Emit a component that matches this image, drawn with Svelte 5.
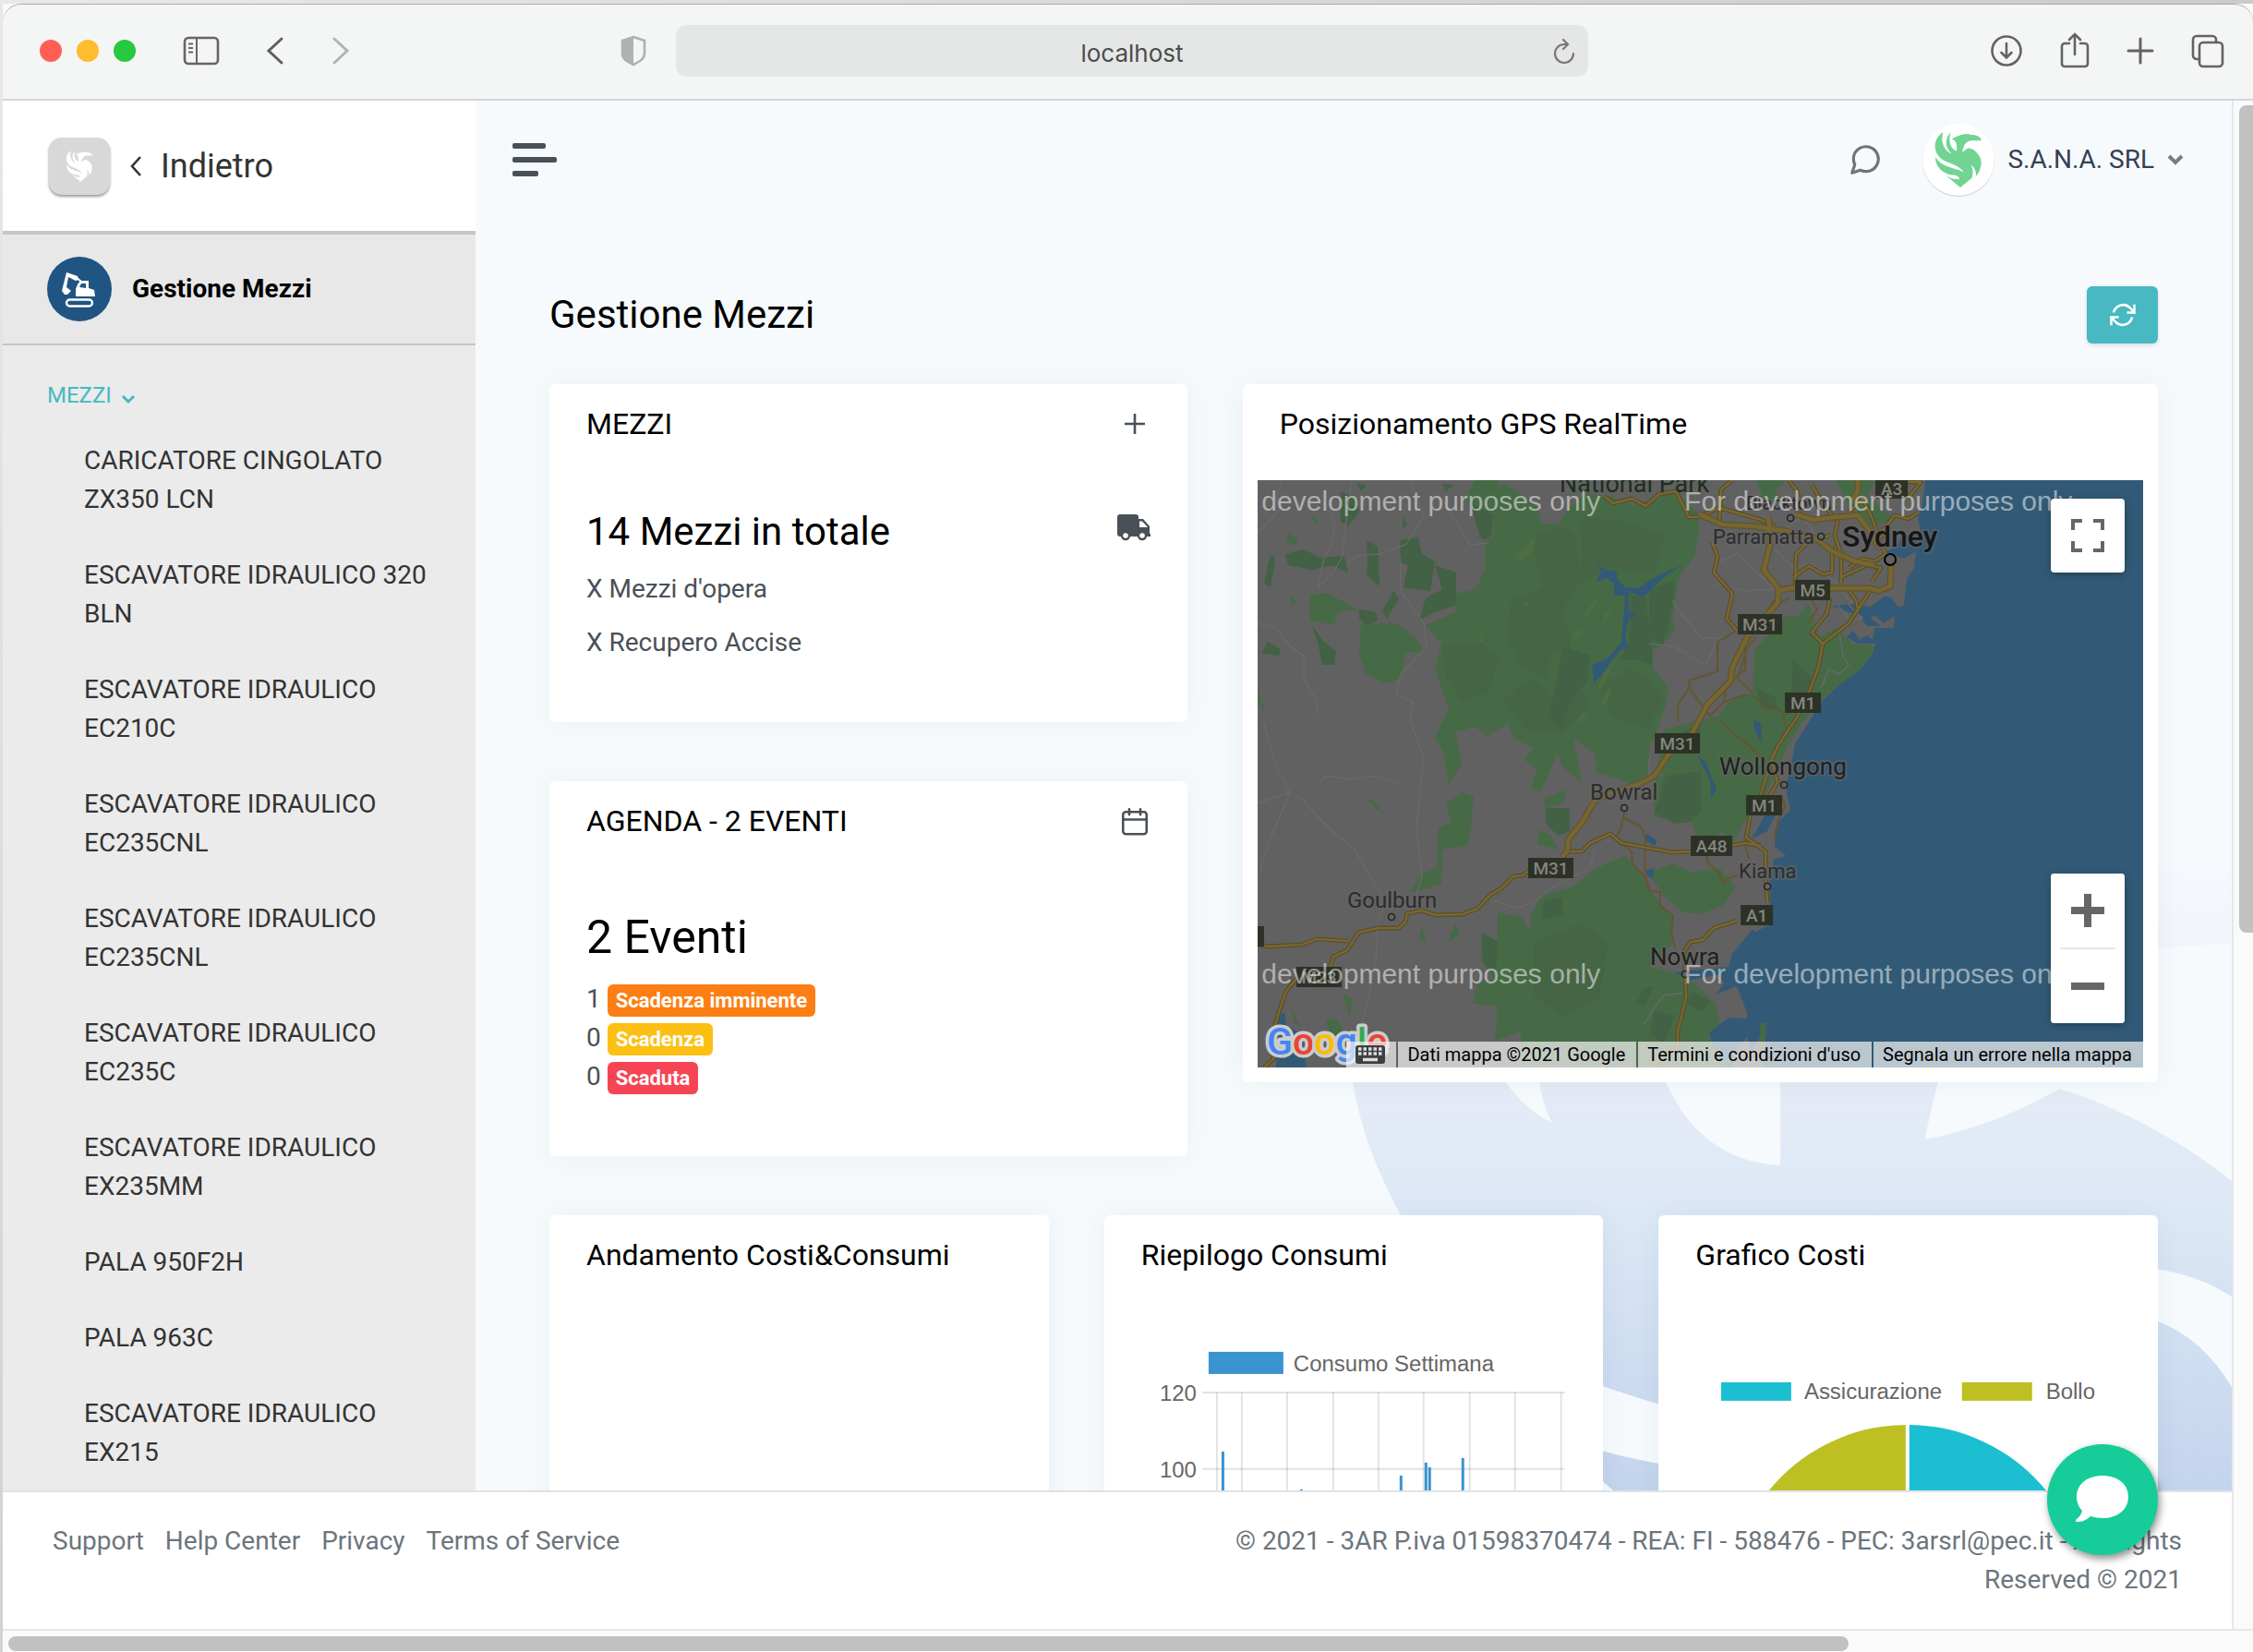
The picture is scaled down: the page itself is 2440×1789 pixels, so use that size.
<script lang="ts">
	const vehicles = [
		'CARICATORE CINGOLATO ZX350 LCN',
		'ESCAVATORE IDRAULICO 320 BLN',
		'ESCAVATORE IDRAULICO EC210C',
		'ESCAVATORE IDRAULICO EC235CNL',
		'ESCAVATORE IDRAULICO EC235CNL',
		'ESCAVATORE IDRAULICO EC235C',
		'ESCAVATORE IDRAULICO EX235MM',
		'PALA 950F2H',
		'PALA 963C',
		'ESCAVATORE IDRAULICO EX215'
	];

	const events = [
		{ count: 1, label: 'Scadenza imminente', kind: 'soon' },
		{ count: 0, label: 'Scadenza', kind: 'due' },
		{ count: 0, label: 'Scaduta', kind: 'expired' }
	];

	const footerLinks = ['Support', 'Help Center', 'Privacy', 'Terms of Service'];

	// weekly consumption chart
	const gridX = [122, 149, 198, 248, 297, 346, 396, 445, 495];
	const bars = [
		{ x: 127, y: 194 },
		{ x: 212, y: 235 },
		{ x: 320, y: 220 },
		{ x: 347, y: 206 },
		{ x: 351, y: 211 },
		{ x: 387, y: 201 }
	];

	// map layers
	const forest = [
		'M267 3 282 13 303 30 307 47 326 47 335 33 353 15 382 17 407 27 453 13 478 37 478 57 473 83 457 103 449 147 451 163 439 178 428 183 428 203 444 223 444 237 435 265 424 290 423 317 407 330 389 323 367 317 366 297 342 280 351 327 332 313 324 297 307 337 296 333 303 313 289 303 298 290 278 280 271 263 249 277 235 267 214 273 221 307 207 330 201 293 192 280 207 247 192 203 199 177 182 157 215 143 215 123 237 117 246 97 246 67 257 60 257 13Z',
		'M398 407 412 420 423 443 449 473 449 503 424 527 464 537 478 550 496 567 500 590 489 598 492 610 510 636 285 636 285 597 257 607 260 570 233 567 239 543 256 540 242 520 244 490 260 500 260 468 285 473 296 490 296 470 307 450 342 440 367 420Z',
		'M597 133 586 147 572 147 539 183 536 230 510 240 500 255 470 262 440 270 435 300 428 340 430 365 470 370 480 395 505 380 510 400 530 365 545 350 560 320 573 290 590 262 612 236 632 220 655 203 666 188 669 180 645 177 626 160 608 170Z',
		'M423 425 450 415 470 425 500 420 518 440 505 460 480 470 460 468 440 450Z',
		'M57 125 75 122 108 140 86 143 83 157 57 152Z',
		'M112 155 150 155 170 170 180 185 160 187 155 215 138 220 117 210 110 188Z',
		'M235 0 262 0 254 60 240 62 237 40 226 20Z',
		'M540 0 572 0 560 12 575 30 548 20Z',
		'M626 0 670 0 660 18 690 42 665 50 640 25Z',
		'M222 338 234 343 232 365 228 395 200 400 199 437 165 447 178 426 194 420 196 377 210 370 203 350Z',
		'M310 345 335 335 330 350 312 355Z',
		'M305 378 318 385 325 400 303 394Z',
		'M118 345 124 346 136 360 128 356Z',
		'M177 482 184 500 175 498Z',
		'M214 480 219 493 206 500Z',
		'M92 555 103 562 100 582Z',
		'M36 570 47 593 40 588Z',
		'M74 585 86 583 93 597 80 605Z',
		'M33 57 45 66 40 70 32 70Z',
		'M34 125 42 130 39 138Z',
		'M60 37 66 45 60 46Z',
		'M0 228 9 253 0 240Z',
		'M548 636 539 590 551 587 549 636Z'
	];

	const darkForest = [
		'M30 80 50 75 68 84 94 82 98 100 80 92 60 97 33 92Z',
		'M14 80 19 85 14 115 7 112Z',
		'M118 65 130 72 132 115 118 103 119 85Z',
		'M155 65 174 62 178 80 192 88 187 120 158 116 163 92 153 88Z',
		'M192 92 215 100 215 135 188 145 175 152 182 128 200 118Z',
		'M147 120 153 128 140 150 135 142Z',
		'M110 140 128 143 130 152 118 157 110 150Z',
		'M4 187 11 175 25 183 23 190Z',
		'M59 158 72 175 85 185 83 200 70 200 65 175Z',
		'M90 12 108 20 110 35 98 50 90 45Z',
		'M107 3 118 6 112 12Z',
		'M200 4 212 5 203 12Z',
		'M157 40 162 48 157 52Z',
		'M232 25 255 38 252 62 243 65 236 45Z',
		'M442 320 480 315 480 360 468 370 452 372 430 360Z',
		'M405 125 420 128 425 165 428 200 412 195 392 195 402 175Z',
		'M424 120 452 108 447 150 438 178 424 170Z',
		'M330 180 360 190 356 220 340 235 330 270 315 255 325 215Z',
		'M312 355 338 355 338 380 325 385 312 372Z',
		'M310 455 330 452 330 470 308 476Z',
		'M242 490 260 500 258 530 245 525Z',
		'M418 550 428 548 420 568 410 567Z',
		'M470 555 492 565 480 575 465 568Z',
		'M430 575 452 580 440 610 425 600Z',
		'M540 225 560 235 565 250 545 245Z',
		'M580 195 600 215 592 240 578 230Z',
		'M455 275 480 265 475 290 462 285Z'
	];

	// hills, slightly off the forest colour
	const hills = [
		'M300 60 330 50 345 60 350 110 330 140 340 180 318 190 312 215 285 200 270 170 275 130 310 118 302 90Z',
		'M350 40 400 45 440 60 430 100 380 95 350 110Z',
		'M200 180 240 175 262 190 250 230 222 240 205 215Z',
		'M265 235 300 215 320 240 350 225 360 250 330 275 290 270Z',
		'M370 225 400 205 425 215 440 240 420 270 385 255Z',
		'M300 500 350 480 380 500 370 560 330 580 300 560Z'
	];

	const clearings = [
		'M302 60 298 78 285 88 279 82 290 72Z',
		'M370 125 362 142 352 150 358 138Z',
		'M390 130 372 160 376 145Z',
		'M352 160 346 172 339 175 344 164Z',
		'M388 193 372 225 367 228 376 208Z',
		'M385 220 378 240 372 245 378 228Z',
		'M360 248 350 262 342 265 350 254Z',
		'M243 165 245 177 238 172Z',
		'M297 127 292 135 288 134Z',
		'M278 230 272 235 266 234Z'
	];

	const lanes = [
		'M26 0 20 20 24 32 12 45 0 57',
		'M102 0 95 50 92 82 82 100 66 115 72 85 80 70 84 50 78 30',
		'M0 155 20 160 35 180 50 190 50 215 62 235 66 254',
		'M0 350 35 338 48 345 75 375 105 400 125 435 140 455 130 480 128 520 120 560 110 600',
		'M67 328 75 320 100 324 128 320 152 328',
		'M6 260 20 310 35 338 15 385 0 430',
		'M165 260 180 300 172 375 178 430 170 455',
		'M165 0 180 40 160 70 132 80 108 82 95 90',
		'M154 80 155 120 180 155 183 180 155 210 150 232 168 240 165 262',
		'M200 20 230 70 250 68',
		'M255 455 280 463 300 457 320 440 360 420 365 400',
		'M495 90 520 80 560 118 530 120 495 112',
		'M450 130 455 140 480 170 505 172',
		'M424 177 450 180 485 200 495 180',
		'M540 20 560 60 590 40 620 80',
		'M560 75 580 95 600 90 625 110 640 130',
		'M628 135 640 150 655 150 640 135 650 125',
		'M630 165 634 190 640 200 630 210 618 205 610 225 615 215',
		'M424 300 424 325 440 318',
		'M418 590 430 570 440 558 460 555'
	];

	const minorRoads = [
		'M519 163 498 175 498 207 467 217 468 225 478 240 490 255 505 240 530 232',
		'M467 225 455 243 455 262',
		'M505 240 508 220 528 205 528 180',
		'M536 230 520 215 530 182 540 170',
		'M536 233 550 245 568 250 572 268',
		'M397 360 394 375 388 388',
		'M397 366 415 375 420 388 419 430 424 443',
		'M394 393 405 402 406 415 420 430 425 445 436 446 435 460 450 472 448 490 452 507',
		'M486 407 488 415 500 425 504 437 512 430 520 428',
		'M500 260 515 275 530 285 545 300',
		'M568 345 572 352 564 367 560 390',
		'M528 395 532 410',
		'M575 127 550 145 540 160 560 130',
		'M597 125 606 140 596 155'
	];

	const roads = [
		'M337 402 351 402 360 393 382 383 394 393 449 403 470 402 528 393 545 396',
		'M0 503 12 505 48 503 64 497 98 499',
		'M492 67 498 83 494 100 514 123 508 150 519 163',
		'M376 18 385 25 405 20 420 28 435 15 453 12 467 40 478 40',
		'M7 636 17 627 19 590 24 573 31 553 42 540 78 530 82 516 97 509 109 490 130 485 153 485 160 478 162 469 178 466 193 471 222 470 238 464 252 449 264 442 277 429 287 428 300 418',
		'M519 477 494 485 482 498 469 500 462 510 464 560 455 597 455 613 424 636',
		'M620 127 616 145 600 165 612 177 607 203 597 230 584 257 575 270 564 287 556 303 563 327 554 343 534 360 529 387 550 402 550 427 552 457',
		'M612 177 640 155 650 140 648 130 637 115',
		'M650 140 660 125 665 115',
		'M529 387 540 395',
		'M556 305 548 330 540 355',
		'M582 115 583 80 598 65 620 60',
		'M580 105 597 93 612 102 622 100 622 70',
		'M632 112 632 80 625 60 628 45 615 30 600 5',
		'M632 105 660 92 675 95 665 110',
		'M640 95 655 85 668 88 680 80',
		'M575 0 584 12 590 35',
		'M640 35 655 20 665 40 672 60 690 38 705 42 715 35',
		'M685 50 672 65 680 80',
		'M704 20 718 2 700 2',
		'M502 10 514 0',
		'M482 38 500 30 545 43 560 50',
		'M500 45 502 10'
	];

	const motorways = [
		'M330 408 335 402 337 388 352 370 360 355 366 346 380 340 415 328 430 320 445 297 470 275 487 243 512 218 514 203 530 170 563 133 564 117 548 97 555 70 553 40',
		'M478 37 503 48 538 50 572 55 604 63 622 77 647 88 668 92',
		'M564 120 575 117 663 117 672 120 685 115 686 87',
		'M582 37 602 43 625 40 650 38 661 53 672 72',
		'M650 0 650 12 643 22'
	];

	const shields = [
		{ label: 'A3', x: 669, y: -2, w: 35 },
		{ label: 'M5', x: 582, y: 108, w: 38 },
		{ label: 'M31', x: 520, y: 145, w: 48 },
		{ label: 'M1', x: 571, y: 230, w: 39 },
		{ label: 'M31', x: 430, y: 274, w: 49 },
		{ label: 'M1', x: 529, y: 341, w: 39 },
		{ label: 'A48', x: 469, y: 385, w: 45 },
		{ label: 'M31', x: 293, y: 409, w: 49 },
		{ label: 'A1', x: 523, y: 460, w: 35 },
		{ label: 'M23', x: 42, y: 527, w: 49 },
		{ label: '', x: -20, y: 483, w: 27 }
	];

	const towns = [
		{ name: 'Blacktown', x: 529, y: 32, size: 20, cx: 577, cy: 41, minor: true },
		{ name: 'Parramatta', x: 493, y: 69, size: 22, cx: 610, cy: 61, minor: true },
		{ name: 'Wollongong', x: 500, y: 319, size: 26, cx: 570, cy: 330 },
		{ name: 'Bowral', x: 360, y: 346, size: 24, cx: 397, cy: 355, minor: true },
		{ name: 'Kiama', x: 521, y: 431, size: 22, cx: 552, cy: 440, minor: true },
		{ name: 'Goulburn', x: 97, y: 463, size: 24, cx: 145, cy: 473, minor: true },
		{ name: 'Nowra', x: 425, y: 525, size: 26, cx: 463, cy: 535 }
	];

	const watermarks = [
		{ x: -49, y: 33 },
		{ x: 462, y: 33 },
		{ x: -49, y: 545 },
		{ x: 462, y: 545 }
	];
</script>

{#snippet bird()}
	<path
		d="M10 0C-2 8-1 23 11 30C19 33 27 36 32 42C22 37 8 37 2 26C1 35 9 44 20 45C24 45 27 47 27 49C20 50 15 47 11 44L28 58L40 48C42 43 41 38 39 34C44 38 45 43 44 47C50 40 52 30 47 24C45 20 39 16 36 17L30 21C31 14 34 9 40 9H50C49 4 44 3 39 3C33 0 26 4 19 7C23 9 25 11 24 20C17 17 15 8 18 0C11 7 12 17 19 23C10 19 7 9 10 0Z"
	/>
{/snippet}

<div class="browser">
	<header class="toolbar">
		<div class="tools">
			<span class="light red"></span>
			<span class="light yellow"></span>
			<span class="light green"></span>
			<button class="tool panel" aria-label="Sidebar">
				<svg width="40" height="32" viewBox="0 0 40 32" fill="none" stroke="#656565" stroke-width="2.6">
					<rect x="2" y="2" width="36" height="28" rx="4" />
					<path d="M15 2v28M6 8.500h5M6 13h5M6 17.500h5" stroke-width="2" />
				</svg>
			</button>
			<button class="tool back" aria-label="Back">
				<svg width="20" height="32" viewBox="0 0 20 32" fill="none" stroke="#5f5f5f" stroke-width="3" stroke-linecap="round"><path d="M17 3 3 16l14 13" /></svg>
			</button>
			<button class="tool forward" aria-label="Forward">
				<svg width="20" height="32" viewBox="0 0 20 32" fill="none" stroke="#b2b3b3" stroke-width="3" stroke-linecap="round"><path d="m3 3 14 13L3 29" /></svg>
			</button>
			<button class="tool shield" aria-label="Privacy report">
				<svg width="28" height="34" viewBox="0 0 28 34">
					<path d="M14 2 26 6v14c0 6-6 9-12 12C8 29 2 26 2 20V6Z" fill="none" stroke="#b0b2b1" stroke-width="2.600" />
					<path d="M14 1 1 6v14c0 6 5 10 13 13Z" fill="#b0b2b1" />
				</svg>
			</button>
		</div>
		<div class="address">
			<input type="text" value="localhost" aria-label="Address" />
			<button class="tool reload" aria-label="Reload">
				<svg width="26" height="30" viewBox="0 0 26 30" fill="none" stroke="#777" stroke-width="2.200" stroke-linecap="round"><path d="M23 17a10 10 0 1 1-10-10h3M12 2l5 5-5 5" /></svg>
			</button>
		</div>
		<div class="tools end">
			<button class="tool" aria-label="Downloads">
				<svg width="36" height="40" viewBox="0 0 36 40" fill="none" stroke="#636363" stroke-width="2.600" stroke-linecap="round"><circle cx="18" cy="20" r="15.500" /><path d="M18 12v15M12.500 22l5.500 5.500 5.500-5.500" /></svg>
			</button>
			<button class="tool" aria-label="Share">
				<svg width="32" height="40" viewBox="0 0 32 40" fill="none" stroke="#636363" stroke-width="2.600" stroke-linecap="round"><path d="M10 12H5a3 3 0 0 0-3 3v19a3 3 0 0 0 3 3h22a3 3 0 0 0 3-3V15a3 3 0 0 0-3-3h-5M16 24V2M10 8l6-6 6 6" /></svg>
			</button>
			<button class="tool" aria-label="New tab">
				<svg width="30" height="40" viewBox="0 0 30 40" fill="none" stroke="#636363" stroke-width="3" stroke-linecap="round"><path d="M15 7v26M2 20h26" /></svg>
			</button>
			<button class="tool" aria-label="Tabs">
				<svg width="36" height="40" viewBox="0 0 36 40" fill="none" stroke="#636363" stroke-width="2.600"><rect x="9" y="11" width="25" height="26" rx="4" /><path d="M9 29H6a4 4 0 0 1-4-4V8a4 4 0 0 1 4-4h17a4 4 0 0 1 4 4v3" /></svg>
			</button>
		</div>
	</header>

	<div class="viewport">
		<div class="page">
			<div class="body">
				<aside class="sidebar">
					<a class="home" href="/">
						<span class="app-logo">
							<svg width="30" height="34" viewBox="0 0 52 58" fill="#fff">{@render bird()}</svg>
						</span>
						<svg width="14" height="22" viewBox="0 0 14 22" fill="none" stroke="#333" stroke-width="2.600"><path d="M12 1 3 11l9 10" /></svg>
						Indietro
					</a>
					<a class="module" href="/mezzi">
						<svg width="70" height="70" viewBox="0 0 70 70">
							<circle cx="35" cy="35" r="35" fill="#205583" />
							<path d="M21 17 33 21 34 25 31 26 23 22 21 33 26 37 22 41H19L16 37ZM33 30 36 26H45V34L51 36 52 43H31V35Z" fill="#fff" />
							<path d="M35 33l2-4h5v5z" fill="#205583" />
							<path d="M31 22 37 27" stroke="#fff" stroke-width="2" />
							<rect x="21" y="46.500" width="28" height="7" rx="3.500" fill="none" stroke="#fff" stroke-width="2.400" />
						</svg>
						Gestione Mezzi
					</a>
					<nav>
						<button class="group">
							MEZZI
							<svg width="16" height="12" viewBox="0 0 16 12" fill="none" stroke="currentColor" stroke-width="3"><path d="m2 2 6 6 6-6" /></svg>
						</button>
						<ul>
							{#each vehicles as vehicle}
								<li><a href="/mezzi">{vehicle}</a></li>
							{/each}
						</ul>
					</nav>
				</aside>

				<main>
					<!-- phoenix in the page background -->
					<svg class="backdrop" width="1000" height="760" viewBox="0 0 1000 760" aria-hidden="true">
						<defs>
							<linearGradient id="sky" x1="0" y1="0" x2="0" y2="1">
								<stop offset="0" stop-color="#e6ecf7" />
								<stop offset=".35" stop-color="#dde8f6" />
								<stop offset="1" stop-color="#c3d4ed" />
							</linearGradient>
							<linearGradient id="wing" x1="0" y1="0" x2="0" y2="1">
								<stop offset="0" stop-color="#f6fafd" />
								<stop offset="1" stop-color="#f1f4fc" />
							</linearGradient>
						</defs>
						<path d="M880 70H1000V168Q940 170 880 178Z" fill="url(#wing)" />
						<path
							fill="url(#sky)"
							d="M46 300C50 350 72 415 105 470C180 600 260 700 330 760H1000V425C950 385 880 345 813 325C770 350 720 370 668 380C672 355 678 335 686 300H511V408C450 405 405 370 380 300H248Q251 338 264 362Q228 345 202 300Z"
						/>
						<path fill="#f6fafd" d="M300 640C340 655 390 672 440 680V742C400 735 350 727 300 712Z" />
						<path fill="#f6fafd" d="M880 517Q950 518 1000 550V648Q968 595 920 577L880 562Z" />
					</svg>

					<div class="topbar">
						<button class="burger" aria-label="Menu"><i></i><i></i><i></i></button>
						<button class="messages" aria-label="Messaggi">
							<svg width="38" height="38" viewBox="0 0 24 24" fill="none" stroke="#6c757d" stroke-width="2" stroke-linecap="round" stroke-linejoin="round"><path d="M21 11.500a8.400 8.400 0 0 1-.9 3.800 8.500 8.500 0 0 1-7.600 4.700 8.400 8.400 0 0 1-3.800-.9L3 21l1.900-5.700a8.400 8.400 0 0 1-.9-3.800 8.500 8.500 0 0 1 4.700-7.600 8.400 8.400 0 0 1 3.800-.9h.5a8.500 8.500 0 0 1 8 8z" /></svg>
						</button>
						<button class="account">
							<span class="avatar"><svg width="54" height="60" viewBox="0 0 52 58" fill="#71d492">{@render bird()}</svg></span>
							S.A.N.A. SRL
							<svg width="18" height="14" viewBox="0 0 18 14" fill="none" stroke="#7c7c7c" stroke-width="4"><path d="m2 3 7 7 7-7" /></svg>
						</button>
					</div>

					<div class="content">
						<div class="title">
							<h1>Gestione Mezzi</h1>
							<button class="refresh" aria-label="Aggiorna">
								<svg width="30" height="30" viewBox="0 0 24 24" fill="none" stroke="#fff" stroke-width="2" stroke-linecap="square"><path d="M22 4v6h-5.500M2 20v-6h5.500M4.200 9a8.500 8.500 0 0 1 14-3.200L22 10M2 14l3.800 4.200A8.500 8.500 0 0 0 19.800 15" /></svg>
							</button>
						</div>

						<div class="cards">
							<div class="stack">
								<section class="card">
									<header>
										<h2>MEZZI</h2>
										<button class="icon" aria-label="Aggiungi">
											<svg width="36" height="36" viewBox="0 0 36 36" stroke="#495057" stroke-width="2.600"><path d="M18 7v22M7 18h22" /></svg>
										</button>
									</header>
									<div class="info">
										<div class="figure">
											<h3>14 Mezzi in totale</h3>
											<svg width="36" height="32" viewBox="0 0 36 32" fill="#495057">
												<path d="M3 2h17a3 3 0 0 1 3 3v2h5l7 8v8h1v3H3a3 3 0 0 1-3-3V5a3 3 0 0 1 3-3Z" />
												<path d="M24 9.500h3l6 6.500h-9z" fill="#fff" />
												<circle cx="9" cy="25" r="4" fill="#fff" stroke="#495057" stroke-width="2.400" />
												<circle cx="27" cy="25" r="4" fill="#fff" stroke="#495057" stroke-width="2.400" />
											</svg>
										</div>
										<p>X Mezzi d'opera</p>
										<p>X Recupero Accise</p>
									</div>
								</section>

								<section class="card">
									<header>
										<h2>AGENDA - 2 EVENTI</h2>
										<button class="icon" aria-label="Calendario">
											<svg width="36" height="36" viewBox="0 0 24 24" fill="none" stroke="#495057" stroke-width="1.700" stroke-linecap="round" stroke-linejoin="round"><rect x="3.500" y="5.500" width="17" height="16" rx="2" /><path d="M16 3.500v4M8 3.500v4M3.500 11h17" /></svg>
										</button>
									</header>
									<div class="info">
										<h3 class="big">2 Eventi</h3>
										<ul class="events">
											{#each events as event}
												<li>{event.count} <span class="badge {event.kind}">{event.label}</span></li>
											{/each}
										</ul>
									</div>
								</section>
							</div>

							<section class="card gps">
								<header><h2>Posizionamento GPS RealTime</h2></header>
								<div class="map">
									<svg class="terrain" viewBox="0 0 959 636" preserveAspectRatio="xMidYMid slice" role="img" aria-label="Mappa">
										<rect width="959" height="636" fill="#616161" />
										<g fill="#466a45">{#each forest as d}<path {d} />{/each}</g>
										<g fill="#456545">{#each hills as d}<path {d} />{/each}</g>
										<g fill="#436144">{#each darkForest as d}<path {d} />{/each}</g>
										<g fill="#4f6d42">{#each clearings as d}<path {d} />{/each}</g>
										<g fill="#325a76">
											<path d="M959 0H723L720 27 715 40 718 57 700 60 690 72 680 78 700 85 713 77 711 95 703 107 700 135 694 138 686 127 680 125 664 137 640 134 622 136 640 143 655 147 655 153 661 158 675 158 664 150 668 146 678 155 690 147 689 160 668 160 666 173 660 168 652 173 645 163 638 170 650 177 669 177 666 188 655 203 632 220 612 238 600 257 582 285 580 297 573 327 573 340 577 357 564 370 560 380 560 397 572 407 559 410 555 433 555 460 558 480 543 487 525 500 518 515 514 530 518 547 529 570 539 590 551 587 548 636H959Z" />
											<path d="M535 487 514 513 510 527 450 533 470 541 500 535 505 545 496 557 519 548 530 577 530 603 535 620 545 600 540 570 530 550 560 500Z" />
											<path d="M510 582 530 583 530 603 516 620 514 636 510 636 492 610 489 598Z" />
											<path d="M366 88 372 95 378 97 389 98 389 107 398 116 412 117 425 108 440 100 460 92 440 105 418 127 402 121 402 142 410 145 402 150 398 170 402 180 392 185 380 200 372 212 364 220 362 200 380 192 394 175 396 150 398 125 386 125 386 112 378 106 367 110 372 98Z" />
											<path d="M22 578 29 577 31 590 48 600 53 636 20 636Z" />
											<path d="M476 298 485 305 491 320 497 335 491 345 490 325Z" />
											<path d="M421 382 432 390 430 396 420 390ZM421 422 429 420 428 432 421 428Z" />
											<path d="M550 362 562 360 552 380 535 388Z" />
											<path d="M537 258 552 270 545 265 546 285 538 270Z" />
										</g>
										<g fill="none" stroke="#6b6b6b" stroke-width="1.200">{#each lanes as d}<path {d} />{/each}</g>
										<g fill="none" stroke="#65552f" stroke-width="2">{#each minorRoads as d}<path {d} />{/each}</g>
										<g fill="none" stroke-linejoin="round">
											<g stroke="#5b5130" stroke-width="5">{#each roads as d}<path {d} />{/each}</g>
											<g stroke="#7c6a2e" stroke-width="2">{#each roads as d}<path {d} />{/each}</g>
											<g stroke="#5f5430" stroke-width="7">{#each motorways as d}<path {d} />{/each}</g>
											<g stroke="#77662f" stroke-width="4.600">{#each motorways as d}<path {d} />{/each}</g>
										</g>
										{#each shields as shield}
											<rect x={shield.x} y={shield.y} width={shield.w} height="22" fill="#2d3226" />
											<text class="shield-label" x={shield.x + shield.w / 2} y={shield.y + 18} text-anchor="middle">{shield.label}</text>
										{/each}
										<text class="park" x="327" y="13">National Park</text>
										{#each towns as town}
											<text class="town" class:minor={town.minor} x={town.x} y={town.y} font-size={town.size}>{town.name}</text>
											<circle cx={town.cx} cy={town.cy} r="3.500" fill="#666" stroke="#222" stroke-width="1.600" />
										{/each}
										<text class="town city" x="633" y="72" font-size="32">Sydney</text>
										<circle cx="685" cy="86" r="6" fill="#616161" stroke="#000" stroke-width="2" />
										{#each watermarks as mark}
											<text class="dev" x={mark.x} y={mark.y}>For development purposes only</text>
										{/each}
										<text class="google" x="10" y="622"><tspan fill="#4285f4">G</tspan><tspan fill="#ea4335">o</tspan><tspan fill="#fbbc05">o</tspan><tspan fill="#4285f4">g</tspan><tspan fill="#34a853">l</tspan><tspan fill="#ea4335">e</tspan></text>
									</svg>
									<button class="map-button fullscreen" aria-label="Schermo intero">
										<svg width="36" height="36" viewBox="0 0 36 36" fill="none" stroke="#666" stroke-width="4"><path d="M2 12V2h10M24 2h10v10M34 24v10H24M12 34H2V24" /></svg>
									</button>
									<div class="zoom">
										<button class="map-button" aria-label="Zoom avanti">
											<svg width="36" height="36" viewBox="0 0 36 36" stroke="#666" stroke-width="8"><path d="M18 0v36M0 18h36" /></svg>
										</button>
										<button class="map-button" aria-label="Zoom indietro">
											<svg width="36" height="36" viewBox="0 0 36 36" stroke="#666" stroke-width="8"><path d="M0 18h36" /></svg>
										</button>
									</div>
									<div class="credits">
										<button aria-label="Scorciatoie da tastiera">
											<svg width="32" height="20" viewBox="0 0 32 20"><rect width="32" height="20" rx="3" fill="#3c4043" /><path d="M3 4h26M3 9h26" stroke="#ddd" stroke-width="3.500" stroke-dasharray="3.500 2" /><path d="M8 15.500h16" stroke="#ddd" stroke-width="3.500" /></svg>
										</button>
										<span>Dati mappa ©2021 Google</span>
										<a href="/termini">Termini e condizioni d'uso</a>
										<a href="/errore">Segnala un errore nella mappa</a>
									</div>
								</div>
							</section>

							<section class="card third">
								<header><h2>Andamento Costi&amp;Consumi</h2></header>
							</section>

							<section class="card third">
								<header><h2>Riepilogo Consumi</h2></header>
								<svg class="chart" viewBox="0 0 541 500" role="img" aria-label="Riepilogo Consumi">
									<rect x="113" y="86" width="81" height="24" fill="#3a94cf" />
									<text x="205" y="107">Consumo Settimana</text>
									<text x="100" y="139" text-anchor="end">120</text>
									<text x="100" y="222" text-anchor="end">100</text>
									<path d="M106 130h393M106 213h393" stroke="#e2e2e2" stroke-width="2" />
									{#each gridX as x}
										<path d="M{x} 130v340" stroke="#000" stroke-opacity=".11" stroke-width="2" />
									{/each}
									{#each bars as bar}
										<rect x={bar.x} y={bar.y} width="3" height={470 - bar.y} fill="#3a94cf" />
									{/each}
								</svg>
							</section>

							<section class="card third">
								<header><h2>Grafico Costi</h2></header>
								<svg class="chart" viewBox="0 0 541 500" role="img" aria-label="Grafico Costi">
									<rect x="68" y="119" width="76" height="20" fill="#1bbfd1" />
									<text x="158" y="137">Assicurazione</text>
									<rect x="329" y="119" width="76" height="20" fill="#bdbf22" />
									<text x="420" y="137">Bollo</text>
									<path d="M270 165a194 194 0 0 0 0 388z" fill="#bdbf22" />
									<path d="M270 165a194 194 0 0 1 0 388z" fill="#1bbfd1" />
									<path d="M270 160v400" stroke="#fff" stroke-width="4" />
								</svg>
							</section>
						</div>
					</div>
				</main>
			</div>

			<footer>
				<nav>
					{#each footerLinks as link}
						<a href="/">{link}</a>
					{/each}
				</nav>
				<p>© 2021 - 3AR P.iva 01598370474 - REA: FI - 588476 - PEC: 3arsrl@pec.it - All Rights Reserved © 2021</p>
			</footer>

			<button class="chat" aria-label="Chat">
				<svg width="58" height="52" viewBox="0 0 58 52" fill="#fff"><path d="M29 0C45 0 57 9 57 23S45 46 29 46q-7 0-13-2C11 49 6 50 1 50q-2-1 0-3 5-4 6-9Q1 32 1 23C1 9 13 0 29 0Z" /></svg>
			</button>
		</div>
		<div class="scroll-y"><i></i></div>
	</div>
	<div class="scroll-x"><i></i></div>
</div>

<style>
	:global(body) {
		background: #dcdcdc;
	}

	* {
		box-sizing: border-box;
	}

	.browser {
		display: flex;
		flex-direction: column;
		height: 100vh;
		border: solid #b5b5b5;
		border-width: 4px 0 0 3px;
		border-image: linear-gradient(135deg, #e8e8e8, #b5b5b5) 4;
		background: #fafafa;
		font-family: Roboto, sans-serif;
		font-size: 28px;
		line-height: 42px;
		color: #495057;
		overflow: hidden;
	}

	h1,
	h2,
	h3,
	p,
	ul {
		margin: 0;
		padding: 0;
		font-weight: 400;
	}

	ul {
		list-style: none;
	}

	a {
		color: inherit;
		text-decoration: none;
	}

	button {
		display: flex;
		align-items: center;
		padding: 0;
		border: 0;
		background: none;
		font: inherit;
		color: inherit;
	}

	svg {
		flex: none;
	}

	/* browser chrome */
	.toolbar {
		display: flex;
		align-items: center;
		flex: none;
		height: 105px;
		padding: 0 31px 2px 40px;
		border-top: 1px solid #aaa;
		border-bottom: 2px solid #d3d6d8;
		border-radius: 20px 20px 0 0;
		background: #f4f5f5;
	}

	.tools {
		display: flex;
		align-items: center;
		flex: 1;
	}

	.tools.end {
		justify-content: flex-end;
		gap: 40px;
	}

	.light {
		width: 24px;
		height: 24px;
		margin-right: 16px;
		border-radius: 50%;
	}

	.red {
		background: #ff5f57;
	}

	.yellow {
		background: #febc2e;
	}

	.green {
		background: #28c840;
	}

	.panel {
		margin-left: 35px;
	}

	.back {
		margin-left: 50px;
	}

	.forward {
		margin-left: 51px;
	}

	.shield {
		margin-left: auto;
		margin-right: 32px;
	}

	.address {
		position: relative;
		width: 988px;
	}

	.address input {
		width: 100%;
		height: 56px;
		padding: 4px 0 0;
		border: 0;
		border-radius: 12px;
		background: #e5e7e6;
		font-family: Inter, sans-serif;
		font-size: 26px;
		color: #4c4c4c;
		text-align: center;
	}

	.reload {
		position: absolute;
		top: 14px;
		right: 13px;
	}

	.viewport {
		display: flex;
		flex: 1;
		min-height: 0;
	}

	.page {
		position: relative;
		display: flex;
		flex-direction: column;
		flex: 1;
		min-width: 0;
	}

	.scroll-y {
		flex: none;
		width: 23px;
		padding: 5px 0 0 6px;
		border-left: 2px solid #e7e7e7;
	}

	.scroll-y i {
		display: block;
		height: 896px;
		border-radius: 8px 0 0 8px;
		background: #c1c1c1;
	}

	.scroll-x {
		flex: none;
		height: 25px;
		padding: 6px 0 0 6px;
		border-top: 2px solid #e7e7e7;
	}

	.scroll-x i {
		display: block;
		width: 82%;
		height: 16px;
		border-radius: 8px;
		background: #c1c1c1;
	}

	.body {
		display: flex;
		flex: 1;
		min-height: 0;
		overflow: hidden;
	}

	/* sidebar */
	.sidebar {
		flex: none;
		width: 512px;
		background: #ebebeb;
		color: #333;
	}

	.home {
		display: flex;
		align-items: center;
		height: 145px;
		padding-left: 50px;
		border-bottom: 4px solid #c6c6c6;
		background: #fff;
		font-size: 36px;
	}

	.home > svg {
		margin: 0 20px 0 21px;
	}

	.app-logo {
		display: flex;
		align-items: center;
		justify-content: center;
		width: 66px;
		height: 62px;
		border-radius: 14px;
		background: #d8d8d8;
		box-shadow: 0 2px 3px #999;
	}

	.module {
		display: flex;
		align-items: center;
		gap: 22px;
		height: 120px;
		padding-left: 48px;
		border-bottom: 2px solid #c4c4c4;
		background: #e8e8e8;
		font-weight: 700;
		color: #000;
	}

	.group {
		gap: 10px;
		margin: 33px 0 9px 48px;
		font-size: 24px;
		color: #45b9c1;
	}

	.group svg {
		margin-top: 10px;
	}

	.sidebar li {
		padding: 20px 48px 20px 88px;
	}

	/* main area */
	main {
		position: relative;
		flex: 1;
		min-width: 0;
		background: #f6fafd;
	}

	.backdrop {
		position: absolute;
		top: 745px;
		right: 0;
	}

	.topbar {
		position: relative;
		display: flex;
		align-items: center;
		height: 128px;
		padding: 0 52px 0 40px;
	}

	.burger {
		flex-direction: column;
		align-items: flex-start;
		gap: 9px;
		margin-right: auto;
	}

	.burger i {
		width: 48px;
		height: 6px;
		border-radius: 2px;
		background: #495057;
	}

	.burger i:first-child {
		width: 36px;
	}

	.burger i:last-child {
		width: 28px;
	}

	.messages {
		margin-right: 43px;
	}

	.account {
		gap: 14px;
		color: #343f52;
	}

	.avatar {
		display: flex;
		align-items: center;
		justify-content: center;
		width: 78px;
		height: 78px;
		border-radius: 50%;
		background: #fff;
		box-shadow: 0 1px 1px #ccc;
	}

	.content {
		position: relative;
		padding: 73px 80px 0;
	}

	.title {
		display: flex;
		align-items: center;
		justify-content: space-between;
		margin-bottom: 44px;
	}

	h1 {
		font-size: 42px;
		color: #000;
	}

	.refresh {
		justify-content: center;
		width: 77px;
		height: 62px;
		border-radius: 6px;
		background: #48b9c2;
		box-shadow: 0 2px 4px rgba(0, 0, 0, 0.12);
	}

	.cards {
		display: grid;
		grid-template-columns: repeat(12, minmax(0, 1fr));
		align-items: start;
		gap: 64px 60px;
	}

	.stack {
		display: grid;
		grid-column: span 5;
		gap: 64px;
	}

	.card {
		padding-bottom: 65px;
		border-radius: 6px;
		background: #fff;
		box-shadow: 0 0 32px rgba(30, 60, 90, 0.06);
	}

	.card header {
		display: flex;
		align-items: center;
		justify-content: space-between;
		padding: 24px 39px 0 40px;
	}

	h2 {
		font-size: 32px;
		line-height: 38px;
		color: #000;
	}

	.info {
		padding: 73px 40px 0;
	}

	.figure {
		display: flex;
		justify-content: space-between;
		margin-bottom: 16px;
	}

	.figure svg {
		margin-top: 4px;
	}

	h3 {
		font-size: 42px;
		line-height: 50px;
		color: #000;
	}

	.big {
		margin-bottom: 12px;
		font-size: 50px;
		line-height: 68px;
	}

	p + p {
		margin-top: 16px;
	}

	.badge {
		display: inline-block;
		padding: 7px 9px;
		border-radius: 6px;
		font-size: 22px;
		font-weight: 700;
		line-height: 21px;
		color: #fff;
	}

	.events li {
		height: 42px;
	}

	.soon {
		background: #fd7e14;
	}

	.due {
		background: #fcc015;
	}

	.expired {
		background: #f64455;
	}

	/* map */
	.gps {
		grid-column: span 7;
		padding-bottom: 16px;
	}

	.map {
		position: relative;
		height: 636px;
		margin: 42px 16px 0;
		overflow: hidden;
	}

	.terrain {
		display: block;
		width: 100%;
		height: 100%;
	}

	.shield-label {
		font-size: 19px;
		font-weight: 500;
		fill: #85867f;
	}

	.town {
		fill: #1f1f1f;
		stroke: #656565;
		stroke-opacity: 0.6;
		stroke-width: 4px;
		stroke-linejoin: round;
		paint-order: stroke;
	}

	.minor {
		fill: #2c2c2c;
	}

	.city {
		font-weight: 500;
		fill: #161616;
	}

	.park {
		font-size: 27px;
		fill: #1c2f20;
	}

	.dev {
		font-family: 'Liberation Sans', sans-serif;
		font-size: 30px;
		fill: #fff;
		fill-opacity: 0.5;
	}

	.google {
		font-size: 41px;
		font-weight: 500;
		stroke: #ccc;
		stroke-width: 7px;
		stroke-linejoin: round;
		paint-order: stroke;
	}

	.map-button {
		justify-content: center;
		width: 80px;
		height: 80px;
		border-radius: 4px;
		background: #fff;
	}

	.fullscreen {
		position: absolute;
		top: 20px;
		right: 20px;
		box-shadow: 0 2px 8px rgba(0, 0, 0, 0.3);
	}

	.zoom {
		position: absolute;
		right: 20px;
		bottom: 48px;
		border-radius: 4px;
		background: #fff;
		box-shadow: 0 2px 8px rgba(0, 0, 0, 0.3);
	}

	.zoom::after {
		content: '';
		position: absolute;
		top: 80px;
		left: 10px;
		width: 60px;
		height: 2px;
		background: #e6e6e6;
	}

	.zoom .map-button:last-child {
		margin-top: 2px;
	}

	.credits {
		position: absolute;
		right: 0;
		bottom: 0;
		display: flex;
		gap: 2px;
		font-size: 20px;
		line-height: 28px;
		color: #000;
	}

	.credits > * {
		padding: 0 12px 0 10px;
		background: rgba(245, 245, 245, 0.7);
	}

	/* charts */
	.third {
		grid-column: span 4;
		min-height: 560px;
	}

	.chart {
		display: block;
		width: 100%;
		font-family: 'Liberation Sans', sans-serif;
		font-size: 24px;
		fill: #666;
	}

	/* footer */
	footer {
		display: flex;
		justify-content: space-between;
		flex: none;
		padding: 32px 54px;
		border-top: 2px solid #dee2e6;
		background: #fff;
		color: #6c757d;
	}

	footer nav {
		display: flex;
		gap: 23px;
	}

	footer p {
		width: 45%;
		text-align: right;
	}

	.chat {
		position: absolute;
		right: 80px;
		bottom: 80px;
		justify-content: center;
		width: 120px;
		height: 120px;
		border-radius: 50%;
		background: #16cd99;
		box-shadow: 2px 4px 8px rgba(0, 0, 0, 0.45);
	}
</style>
